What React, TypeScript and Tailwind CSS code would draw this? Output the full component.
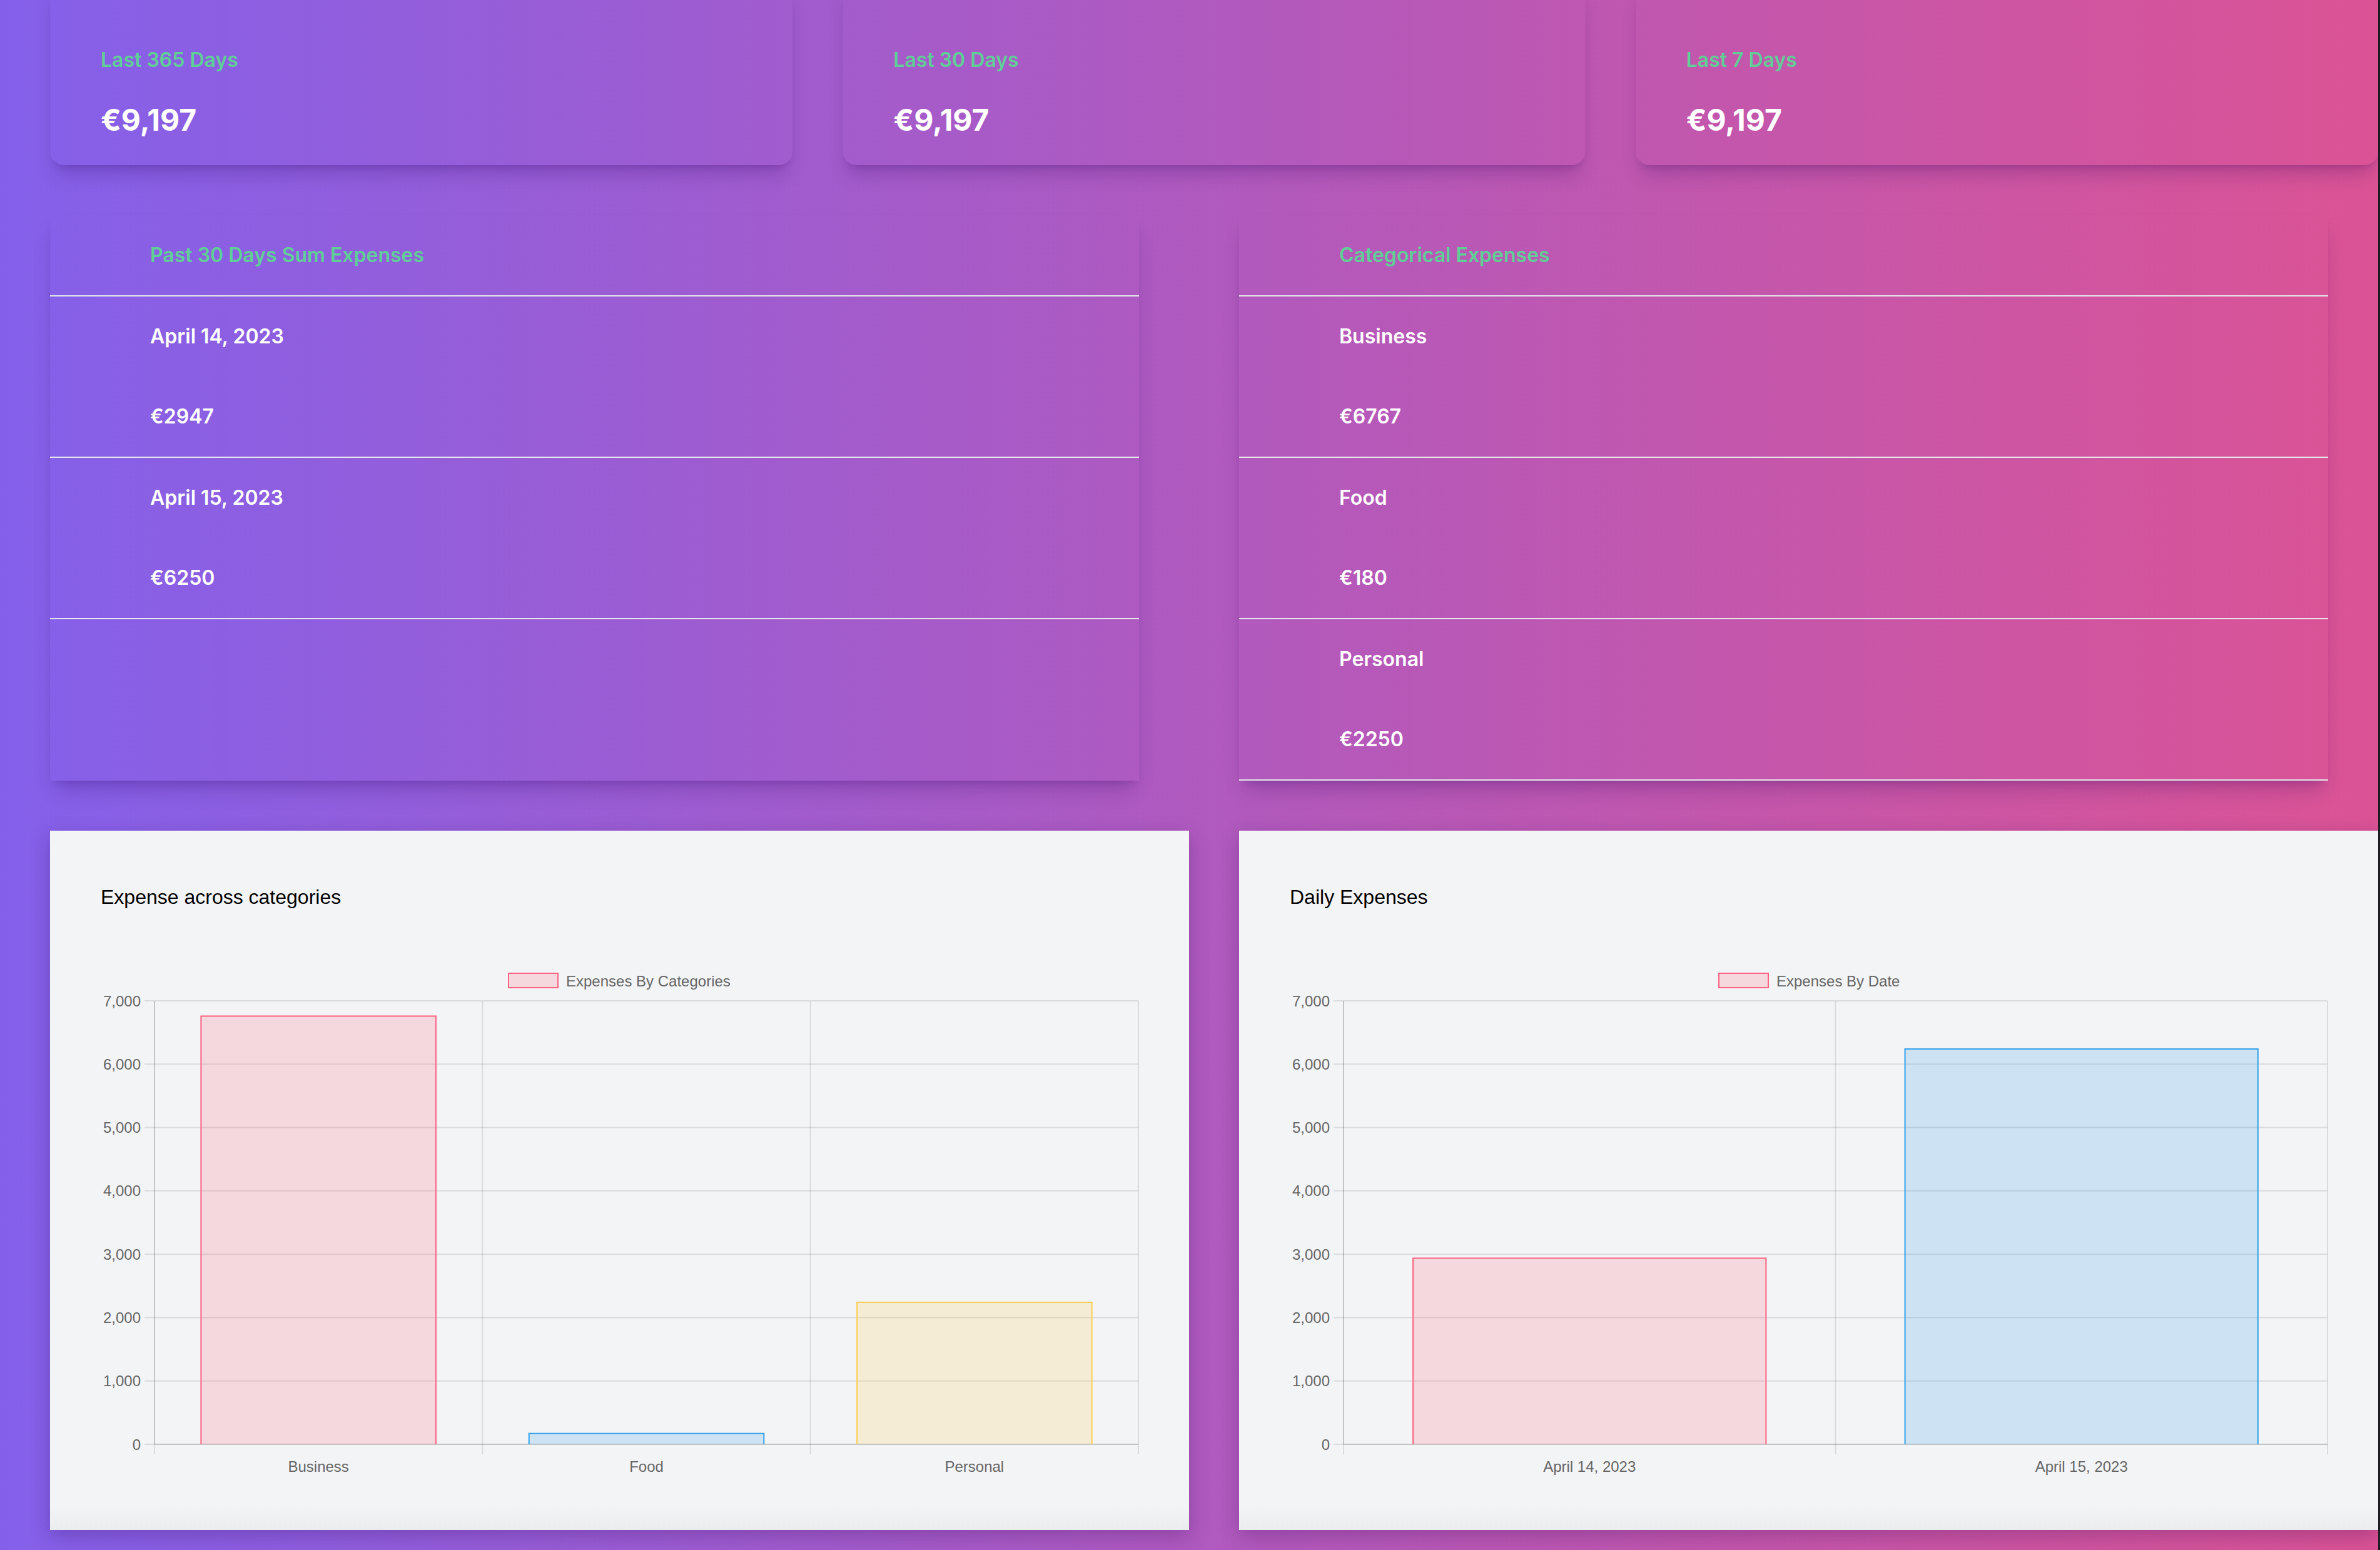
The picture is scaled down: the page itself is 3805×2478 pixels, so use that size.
import React from "react";

type Bar = { label: string; value: number; fill: string; stroke: string };

const PINK = { fill: "rgba(255,99,132,0.2)", stroke: "rgb(255,99,132)" };
const BLUE = { fill: "rgba(54,162,235,0.2)", stroke: "rgb(54,162,235)" };
const YELLOW = { fill: "rgba(255,206,86,0.2)", stroke: "rgb(255,206,86)" };

const stats = [
  { label: "Last 365 Days", amount: "€9,197" },
  { label: "Last 30 Days", amount: "€9,197" },
  { label: "Last 7 Days", amount: "€9,197" },
];

const daily = [
  { name: "April 14, 2023", amount: "€2947" },
  { name: "April 15, 2023", amount: "€6250" },
];

const categories = [
  { name: "Business", amount: "€6767" },
  { name: "Food", amount: "€180" },
  { name: "Personal", amount: "€2250" },
];

function StatCard({ label, amount }: { label: string; amount: string }) {
  return (
    <div className="rounded-[22px] px-[81px] pt-[100px] pb-[40px] shadow-[0_22px_30px_-8px_rgba(40,0,90,0.22),0_8px_12px_-8px_rgba(40,0,90,0.2)]">
      <div className="text-[32px] leading-[48px] font-semibold text-[#60cf97]">{label}</div>
      <div className="mt-[40px] text-[48px] leading-[64px] font-bold text-white">{amount}</div>
    </div>
  );
}

function ListPanel({ title, rows }: { title: string; rows: { name: string; amount: string }[] }) {
  return (
    <div className="mr-[80px] flex flex-col shadow-[0_22px_30px_-8px_rgba(40,0,90,0.22),0_8px_12px_-8px_rgba(40,0,90,0.2)]">
      <div className="h-[130px] flex items-center pl-[160px] border-b-2 border-[#e5e7eb]">
        <span className="text-[32px] leading-[48px] font-semibold text-[#60cf97]">{title}</span>
      </div>
      {rows.map((r) => (
        <div key={r.name} className="border-b-2 border-[#e5e7eb] text-[32px] leading-[48px] font-semibold text-white">
          <div className="h-[128px] flex items-center pl-[160px]">{r.name}</div>
          <div className="h-[128px] flex items-center pl-[160px]">{r.amount}</div>
        </div>
      ))}
    </div>
  );
}

function BarChart({ bars, legend, legendX }: { bars: Bar[]; legend: string; legendX: number }) {
  const axisX = 86;
  const right = 1659;
  const top = 60;
  const zero = 769;
  const max = 7000;
  const y = (v: number) => zero - (v / max) * (zero - top);
  const cat = (right - axisX) / bars.length;
  const bw = cat * 0.72;
  const grid = "rgba(0,0,0,0.1)";
  const ticks = [0, 1000, 2000, 3000, 4000, 5000, 6000, 7000];

  return (
    <svg width={1660} height={830} viewBox="0 0 1660 830" className="block">
      <g fontFamily="'Liberation Sans', Arial, sans-serif" fontSize={24} fill="#666">
        <rect x={legendX + 1} y={16} width={79} height={23} fill={PINK.fill} stroke={PINK.stroke} strokeWidth={2} />
        <text x={legendX + 93} y={28} dominantBaseline="central">{legend}</text>

        {ticks.map((t) => (
          <line key={t} x1={axisX - 16} x2={right} y1={y(t)} y2={y(t)} stroke={grid} strokeWidth={2} />
        ))}
        {bars.map((_, i) => (
          <line key={i} x1={axisX + i * cat} x2={axisX + i * cat} y1={top} y2={zero + 16} stroke={grid} strokeWidth={2} />
        ))}
        <line x1={right} x2={right} y1={top} y2={zero + 16} stroke={grid} strokeWidth={2} />
        <line x1={axisX} x2={axisX} y1={top} y2={zero} stroke={grid} strokeWidth={2} />
        <line x1={axisX} x2={right} y1={zero} y2={zero} stroke={grid} strokeWidth={2} />

        {ticks.map((t) => (
          <text key={t} x={axisX - 22} y={y(t)} textAnchor="end" dominantBaseline="central">
            {t.toLocaleString("en-US")}
          </text>
        ))}

        {bars.map((b, i) => {
          const x0 = axisX + i * cat + (cat - bw) / 2;
          const y0 = y(b.value);
          return (
            <g key={b.label}>
              <rect x={x0} y={y0} width={bw} height={zero - y0} fill={b.fill} />
              <path
                d={`M${x0 + 1} ${zero} V${y0 + 1} H${x0 + bw - 1} V${zero}`}
                fill="none"
                stroke={b.stroke}
                strokeWidth={2}
              />
              <text x={axisX + i * cat + cat / 2} y={804} textAnchor="middle" dominantBaseline="central">
                {b.label}
              </text>
            </g>
          );
        })}
      </g>
    </svg>
  );
}

function ChartCard({ title, children }: { title: string; children: React.ReactNode }) {
  return (
    <div className="h-[1118px] pl-[81px] pr-[80px] pt-[88px] bg-[linear-gradient(to_bottom,#f3f4f6_0,#f3f4f6_1080px,#ebecee_1118px)] shadow-[0_10px_30px_rgba(40,0,80,0.25)]">
      <div className="font-['Liberation_Sans',Arial,sans-serif] text-[32px] leading-[36px] text-black">{title}</div>
      <div className="mt-[88px]">{children}</div>
    </div>
  );
}

export default function App() {
  return (
    <div className="w-[3805px] h-[2478px] overflow-hidden flex bg-[#1c1c21]">
      <div className="w-[3802px] h-full overflow-hidden bg-[linear-gradient(to_right,#8460ea,#db5395)] font-['Inter','Liberation_Sans',sans-serif]">
        <div className="w-[3882px] px-[80px] pt-[32px] flex flex-col gap-[80px]">
          <div className="-mt-[60px] grid grid-cols-3 gap-[80px]">
            {stats.map((s) => (
              <StatCard key={s.label} label={s.label} amount={s.amount} />
            ))}
          </div>

          <div className="grid grid-cols-2 gap-[80px]">
            <ListPanel title="Past 30 Days Sum Expenses" rows={daily} />
            <ListPanel title="Categorical Expenses" rows={categories} />
          </div>

          <div className="grid grid-cols-2 gap-[80px]">
            <ChartCard title="Expense across categories">
              <BarChart
                legend="Expenses By Categories"
                legendX={651}
                bars={[
                  { label: "Business", value: 6767, ...PINK },
                  { label: "Food", value: 180, ...BLUE },
                  { label: "Personal", value: 2250, ...YELLOW },
                ]}
              />
            </ChartCard>
            <ChartCard title="Daily Expenses">
              <BarChart
                legend="Expenses By Date"
                legendX={685}
                bars={[
                  { label: "April 14, 2023", value: 2947, ...PINK },
                  { label: "April 15, 2023", value: 6250, ...BLUE },
                ]}
              />
            </ChartCard>
          </div>
        </div>
      </div>
    </div>
  );
}
